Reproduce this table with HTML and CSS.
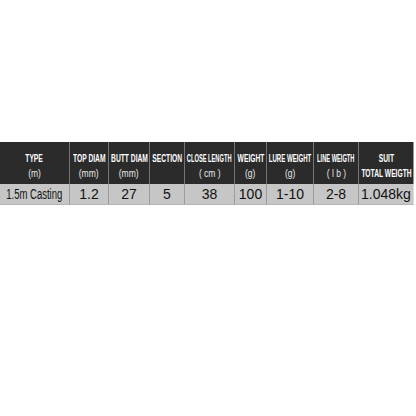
FILE: index.html
```html
<!DOCTYPE html>
<html>
<head>
<meta charset="utf-8">
<link rel="stylesheet" href="styles.css">
</head>
<body>
<div class="spec">
  <div class="row head">
    <div class="cell"><span class="t">TYPE</span><span class="u">(m)</span></div>
    <div class="cell"><span class="t">TOP DIAM</span><span class="u">(mm)</span></div>
    <div class="cell"><span class="t">BUTT DIAM</span><span class="u">(mm)</span></div>
    <div class="cell"><span class="t">SECTION</span></div>
    <div class="cell"><span class="t tight">CLOSE LENGTH</span><span class="u">( cm )</span></div>
    <div class="cell"><span class="t">WEIGHT</span><span class="u">(g)</span></div>
    <div class="cell"><span class="t mid">LURE WEIGHT</span><span class="u">(g)</span></div>
    <div class="cell"><span class="t tight">LINE WEIGTH</span><span class="u">( l b )</span></div>
    <div class="cell"><span class="t">SUIT</span><span class="t">TOTAL WEIGTH</span></div>
  </div>
  <div class="row data">
    <div class="cell"><span class="nar">1.5m Casting</span></div>
    <div class="cell">1.2</div>
    <div class="cell">27</div>
    <div class="cell">5</div>
    <div class="cell">38</div>
    <div class="cell">100</div>
    <div class="cell">1-10</div>
    <div class="cell">2-8</div>
    <div class="cell">1.048kg</div>
  </div>
</div>
</body>
</html>
```
FILE: styles.css
```css
html, body {
  margin: 0;
  padding: 0;
  background: #ffffff;
}
body {
  width: 416px;
  height: 416px;
  font-family: "Liberation Sans", Arial, sans-serif;
}
.spec {
  margin-top: 142px;
  width: 414px;
}
.row {
  display: grid;
  grid-template-columns: 70px 39px 41px 35px 50px 32px 47px 45px 55px;
}
.cell {
  box-sizing: border-box;
  border-right: 1px solid #767676;
  overflow: visible;
}
.cell:last-child {
  border-right-color: #d0d0d0;
}
.head .cell {
  height: 42px;
  background: #2b2b2b;
  color: #ffffff;
  display: flex;
  flex-direction: column;
  align-items: center;
  justify-content: flex-start;
  padding-top: 9px;
}
.head .cell:last-child {
  border-right-color: #9a9a9a;
}
.t {
  display: block;
  font-size: 10px;
  font-weight: bold;
  line-height: 15px;
  white-space: nowrap;
  transform: scaleX(0.67);
}
.t.tight {
  transform: scaleX(0.57);
}
.t.mid {
  transform: scaleX(0.61);
}
.u {
  display: block;
  font-size: 10px;
  line-height: 15px;
  color: #e8e8e8;
  white-space: nowrap;
  transform: scaleX(0.85);
}
.data .cell {
  height: 21px;
  background: #c6c6c6;
  border-right-color: #9c9c9c;
  border-bottom: 1px solid #b4b4b4;
  color: #111111;
  font-size: 14px;
  line-height: 20px;
  display: flex;
  justify-content: center;
  align-items: center;
  white-space: nowrap;
}
.data .cell:last-child {
  border-right-color: #dcdcdc;
}
.nar {
  display: block;
  transform: scaleX(0.68);
}
```
